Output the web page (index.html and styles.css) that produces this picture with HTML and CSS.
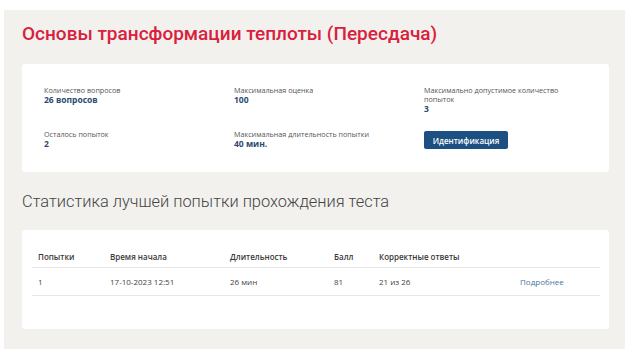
FILE: index.html
```html
<!DOCTYPE html>
<html lang="ru">
<head>
<meta charset="utf-8">
<link rel="stylesheet" href="styles.css">
</head>
<body>
<div class="page">
  <h1 class="title">Основы трансформации теплоты (Пересдача)</h1>
  <section class="card info">
    <div class="item"><div class="label">Количество вопросов</div><div class="value">26 вопросов</div></div>
    <div class="item"><div class="label">Максимальная оценка</div><div class="value">100</div></div>
    <div class="item"><div class="label">Максимально допустимое количество<br>попыток</div><div class="value">3</div></div>
    <div class="item"><div class="label">Осталось попыток</div><div class="value">2</div></div>
    <div class="item"><div class="label">Максимальная длительность попытки</div><div class="value">40 мин.</div></div>
    <div class="item"><button class="btn">Идентификация</button></div>
  </section>
  <h2 class="subtitle">Статистика лучшей попытки прохождения теста</h2>
  <section class="card stats">
    <table class="table">
      <thead>
        <tr><th class="c1">Попытки</th><th class="c2">Время начала</th><th class="c3">Длительность</th><th class="c4">Балл</th><th class="c5">Корректные ответы</th><th class="c6"></th></tr>
      </thead>
      <tbody>
        <tr><td>1</td><td>17-10-2023 12:51</td><td>26 мин</td><td>81</td><td>21 из 26</td><td><a class="link" href="#">Подробнее</a></td></tr>
      </tbody>
    </table>
  </section>
</div>
</body>
</html>
```
FILE: styles.css
```css
html, body { margin: 0; padding: 0; background: #fff; }
body { font-family: "Open Sans", "Noto Sans", sans-serif; }
.page {
  margin: 10px 0 0 4px;
  background: #f2f1ee;
  padding: 13px 16px 20px 18px;
  min-height: 320px;
  box-sizing: border-box;
}
.title {
  margin: 0;
  font-family: Roboto, "Open Sans", sans-serif;
  font-size: 19px;
  line-height: 22px;
  font-weight: 500;
  color: #d9203d;
}
.card {
  background: #fff;
  border-radius: 3px;
}
.info {
  margin-top: 19px;
  padding: 22px 22px 20px 22px;
  display: grid;
  grid-template-columns: 190px 190px 1fr;
  row-gap: 14px;
  height: 108px;
  box-sizing: border-box;
}
.label {
  font-size: 7.2px;
  line-height: 9px;
  color: #555;
}
.value {
  font-size: 8.5px;
  line-height: 9px;
  font-weight: 700;
  color: #2a4a70;
}
.btn {
  display: block;
  width: 84px;
  height: 18px;
  border: 0;
  border-radius: 2px;
  background: #1c4f82;
  color: #fff;
  font-family: inherit;
  font-size: 8px;
  font-weight: 600;
  padding: 0;
  margin-top: 1px;
}
.subtitle {
  margin: 20px 0 0 0;
  font-family: Roboto, "Open Sans", sans-serif;
  font-size: 16.4px;
  line-height: 20px;
  font-weight: 300;
  color: #444;
}
.stats {
  margin-top: 18px;
  padding: 15px 9px 33px 10px;
  height: 99px;
  box-sizing: border-box;
}
.table {
  width: 568px;
  border-collapse: collapse;
  font-size: 8px;
  color: #444;
}
.table th, .table td {
  text-align: left;
  padding: 0 6px;
  border-bottom: 1px solid #e6e6e6;
  white-space: nowrap;
}
.table th { height: 22px; font-weight: 600; color: #3a3a3a; }
.table td { height: 26px; padding-bottom: 1px; }
.c1 { width: 60px; }
.c2 { width: 108px; }
.c3 { width: 92px; }
.c4 { width: 33px; }
.c5 { width: 129px; }
.link { color: #4a74a3; text-decoration: none; }
```
